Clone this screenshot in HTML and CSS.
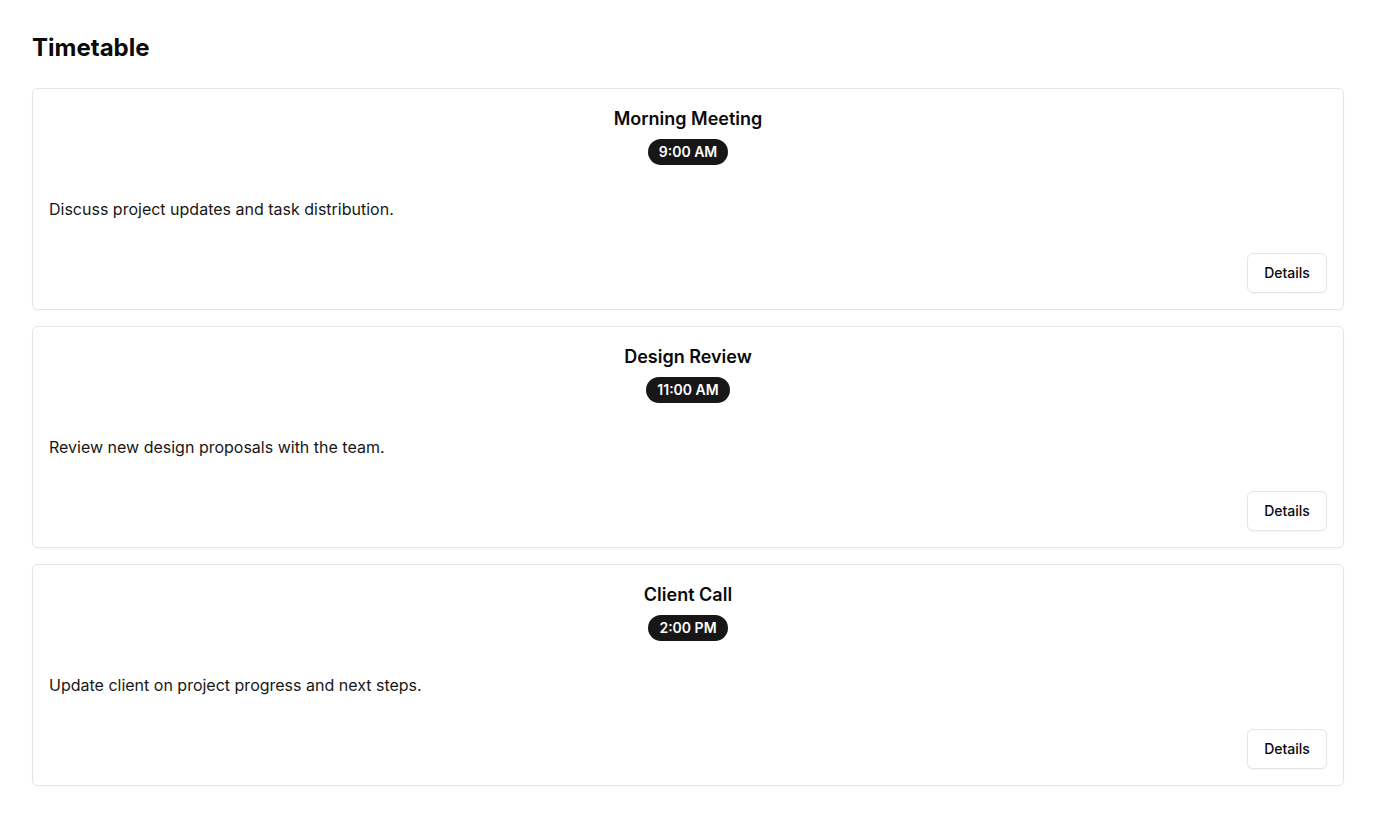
FILE: index.html
```html
<!DOCTYPE html>
<html lang="en">
<head>
<meta charset="utf-8">
<title>Timetable</title>
<link rel="stylesheet" href="styles.css">
</head>
<body>
<main class="page">
  <h1 class="page-title">Timetable</h1>
  <div class="list">
    <section class="card">
      <header class="card-header">
        <h2 class="card-title">Morning Meeting</h2>
        <span class="badge">9:00 AM</span>
      </header>
      <p class="card-text">Discuss project updates and task distribution.</p>
      <footer class="card-footer"><button class="btn">Details</button></footer>
    </section>
    <section class="card">
      <header class="card-header">
        <h2 class="card-title">Design Review</h2>
        <span class="badge">11:00 AM</span>
      </header>
      <p class="card-text">Review new design proposals with the team.</p>
      <footer class="card-footer"><button class="btn">Details</button></footer>
    </section>
    <section class="card">
      <header class="card-header">
        <h2 class="card-title">Client Call</h2>
        <span class="badge">2:00 PM</span>
      </header>
      <p class="card-text">Update client on project progress and next steps.</p>
      <footer class="card-footer"><button class="btn">Details</button></footer>
    </section>
  </div>
</main>
</body>
</html>
```
FILE: styles.css
```css
* { box-sizing: border-box; }
html, body { margin: 0; padding: 0; background: #fff; }
body {
  font-family: Inter, "Noto Sans", Arial, sans-serif;
  color: #0a0a0a;
}
.page { padding: 32px; }
.page-title {
  margin: 0 0 24px;
  font-size: 24px;
  line-height: 32px;
  font-weight: 700;
}
.list { display: flex; flex-direction: column; gap: 16px; }
.card {
  border: 1px solid #e5e5e5;
  border-radius: 6px;
  padding: 16px;
  box-shadow: 0 1px 2px rgba(0,0,0,0.03);
  display: flex;
  flex-direction: column;
}
.card-header {
  display: flex;
  flex-direction: column;
  align-items: center;
  gap: 6px;
}
.card-title {
  margin: 0;
  font-size: 18px;
  line-height: 28px;
  font-weight: 600;
}
.badge {
  background: #171717;
  color: #fff;
  font-size: 14px;
  line-height: 20px;
  font-weight: 600;
  padding: 3px 11px;
  border-radius: 999px;
}
.card-text {
  margin: 32px 0 0;
  font-size: 16px;
  line-height: 24px;
  color: #171717;
}
.card-footer {
  margin-top: 32px;
  display: flex;
  justify-content: flex-end;
}
.btn {
  font-family: inherit;
  font-size: 14px;
  font-weight: 500;
  line-height: 20px;
  color: #0a0a0a;
  background: #fff;
  border: 1px solid #e5e5e5;
  border-radius: 6px;
  height: 40px;
  width: 80px;
  padding: 0 16px 1px;
  box-shadow: 0 1px 2px rgba(0,0,0,0.04);
}
```
